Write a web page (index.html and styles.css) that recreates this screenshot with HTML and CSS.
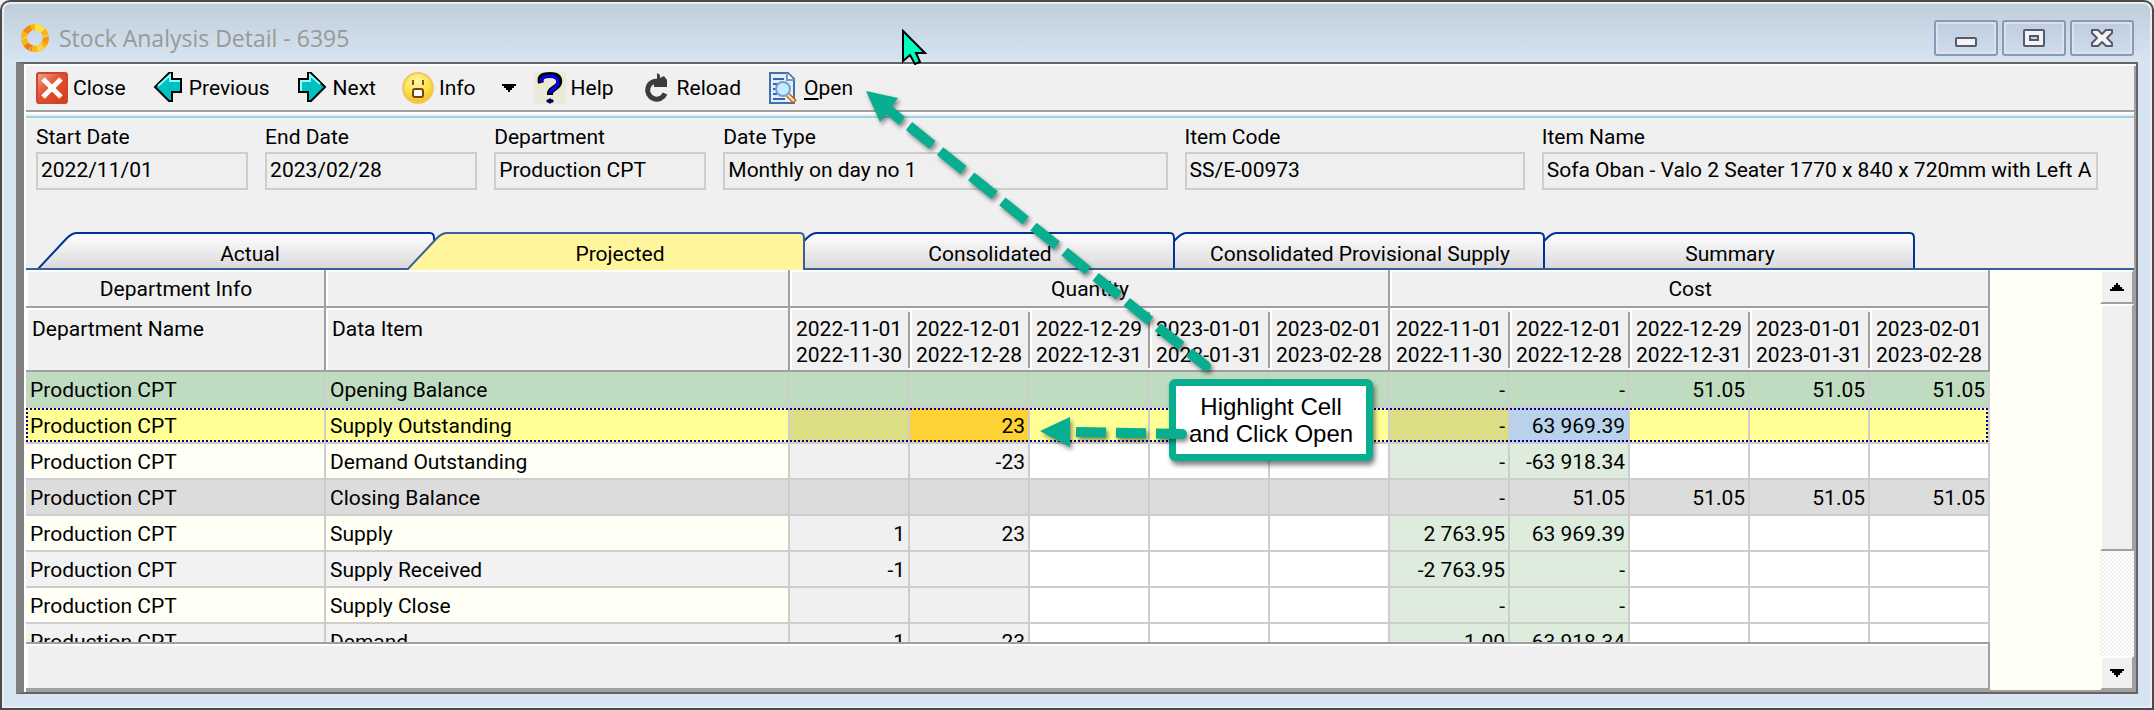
FILE: index.html
```html
<!DOCTYPE html>
<html lang="en">
<head>
<meta charset="utf-8">
<title>Stock Analysis Detail - 6395</title>
<link rel="stylesheet" href="styles.css">
</head>
<body>
<main class="window">
  <header class="titlebar">
    <svg class="app-icon" viewBox="0 0 30 30" aria-hidden="true">
      <g fill="none" stroke-width="6">
        <circle cx="15" cy="15" r="11" stroke="#fdb515"/>
        <path d="M15 4a11 11 0 0 1 8 3.500" stroke="#ffe23c"/>
        <path d="M5.500 9.500A11 11 0 0 1 11 4.700" stroke="#f58a0c"/>
        <path d="M26 14a11 11 0 0 1-1.500 6" stroke="#f79a10"/>
        <path d="M6 21.500a11 11 0 0 0 6 4" stroke="#f07c08"/>
        <path d="M17 25.800a11 11 0 0 0 6-3" stroke="#ffd428"/>
      </g>
      <path d="M20 0l3 5M29 12l-6 2M23 28l-3-5M8 29l3-5M1 16l6-2" stroke="#cbd8e5" stroke-width="1"/>
    </svg>
    <h1 class="title">Stock Analysis Detail - 6395</h1>
    <div class="caption-buttons">
      <button class="caption-button" type="button" aria-label="Minimize">
        <svg viewBox="0 0 26 22"><rect x="3" y="11" width="20" height="8" rx="1" fill="#f4f4f4" stroke="#555a6c" stroke-width="2"/></svg>
      </button>
      <button class="caption-button" type="button" aria-label="Maximize">
        <svg viewBox="0 0 26 22"><rect x="3" y="3" width="20" height="16" rx="1" fill="#f4f4f4" stroke="#555a6c" stroke-width="2"/><rect x="9" y="9" width="8" height="4" fill="#c8d3e3" stroke="#555a6c" stroke-width="2"/></svg>
      </button>
      <button class="caption-button" type="button" aria-label="Close window">
        <svg viewBox="0 0 26 22"><path d="M3 3h6l4 4 4-4h6v3l-5 5 5 5v3h-6l-4-4-4 4H3v-3l5-5-5-5z" fill="#f4f4f4" stroke="#555a6c" stroke-width="2" stroke-linejoin="round"/></svg>
      </button>
    </div>
  </header>

  <div class="client">
    <nav class="toolbar" aria-label="Toolbar">
      <button class="tool" type="button">
        <svg viewBox="0 0 32 32"><defs><linearGradient id="red" x1="0" y1="0" x2="1" y2="1"><stop offset="0" stop-color="#f3a58f"/><stop offset=".45" stop-color="#e2512f"/><stop offset="1" stop-color="#d83a12"/></linearGradient></defs><rect x="1" y="1" width="30" height="30" rx="2" fill="url(#red)" stroke="#c8492c" stroke-width="2"/><path d="M7 7l18 18M25 7L7 25" stroke="#fff" stroke-width="5"/></svg>
        <span>Close</span>
      </button>
      <button class="tool" type="button">
        <svg viewBox="0 0 32 32"><path d="M3 15L17 1h3v6h9v13h-9v9h-3z" fill="#00c0c0" stroke="#000" stroke-width="2"/><path d="M6 14L18 3v6h10" fill="none" stroke="#8ff" stroke-width="2"/></svg>
        <span>Previous</span>
      </button>
      <button class="tool" type="button">
        <svg viewBox="0 0 32 32"><path d="M29 15L15 1h-3v6H3v13h9v9h3z" fill="#00c0c0" stroke="#000" stroke-width="2"/><path d="M5 19V9h9V3l10 9" fill="none" stroke="#8ff" stroke-width="2"/></svg>
        <span>Next</span>
      </button>
      <button class="tool" type="button">
        <svg viewBox="0 0 32 32"><defs><radialGradient id="face" cx=".45" cy=".3" r=".7"><stop offset="0" stop-color="#fff7b0"/><stop offset=".55" stop-color="#fde44c"/><stop offset="1" stop-color="#f4c21a"/></radialGradient></defs><circle cx="16" cy="16" r="15" fill="url(#face)" stroke="#eec668" stroke-width="2"/><path d="M11 8v5M21 8v5" stroke="#8a5410" stroke-width="2"/><rect x="11" y="17" width="10" height="8" rx="2" fill="#fff" stroke="#7c3f14" stroke-width="2"/></svg>
        <span>Info</span>
      </button>
      <button class="tool tool-arrow" type="button" aria-label="More info">
        <svg viewBox="0 0 14 8"><path d="M0 0h14v2h-2v2h-2v2H8v2H6V6H4V4H2V2H0z"/></svg>
      </button>
      <button class="tool tool-help" type="button">
        <svg viewBox="0 0 32 32"><rect width="32" height="32" fill="#ece9d8"/><path d="M7 11C5 4 10 3 16 3s10 2 9 8c-1 5-8 5-9 10v2" fill="none" stroke="#000" stroke-width="6"/><path d="M7 10c0-5 4-6 9-6s8 2 8 7-7 5-8 10" fill="none" stroke="#00f" stroke-width="3"/><path d="M13 28h2v-1h2v1h2v2h-2v1h-2v-1h-2z" fill="#000080" stroke="#000040"/></svg>
        <span>Help</span>
      </button>
      <button class="tool" type="button">
        <svg viewBox="0 0 32 32"><path d="M19 9.500a9 9 0 1 0 6 12" fill="none" stroke="#3c3c3c" stroke-width="5"/><path d="M17 1l3 2v3l4-2 3 4v7H14v-3l3-3z" fill="#3c3c3c"/></svg>
        <span>Reload</span>
      </button>
      <button class="tool" type="button">
        <svg viewBox="0 0 32 32"><path d="M3 1h18l6 6v24H3z" fill="#e4eefa" stroke="#3f73a8" stroke-width="2"/><path d="M20 1v7h7" fill="#fff" stroke="#6f9ac4" stroke-width="2"/><path d="M6 7h11M6 12h5M6 17h3M6 22h4M6 27h12" stroke="#3f5fae" stroke-width="2"/><circle cx="16" cy="17" r="7" fill="#c4ecff" stroke="#6f9fd8" stroke-width="2"/><path d="M21 23l7 7" stroke="#c86414" stroke-width="5"/><path d="M21 23l6 6" stroke="#ffe9b8" stroke-width="2"/></svg>
        <span><u>O</u>pen</span>
      </button>
    </nav>

    <form class="fields">
      <div class="field"><label for="f1">Start Date</label><input id="f1" value="2022/11/01" readonly></div>
      <div class="field"><label for="f2">End Date</label><input id="f2" value="2023/02/28" readonly></div>
      <div class="field"><label for="f3">Department</label><input id="f3" value="Production CPT" readonly></div>
      <div class="field"><label for="f4">Date Type</label><input id="f4" value="Monthly on day no 1" readonly></div>
      <div class="field"><label for="f5">Item Code</label><input id="f5" value="SS/E-00973" readonly></div>
      <div class="field"><label for="f6">Item Name</label><input id="f6" value="Sofa Oban - Valo 2 Seater 1770 x 840 x 720mm with Left A" readonly></div>
    </form>

    <div class="tabs" role="tablist">
      <button class="tab" type="button" role="tab">
        <svg viewBox="0 0 400 38"><defs><linearGradient id="tabfill" x1="0" y1="0" x2="0" y2="1"><stop offset="0" stop-color="#fff"/><stop offset="1" stop-color="#d8d8d8"/></linearGradient></defs><path d="M1 38L31 6q5-5 10-5h353q4 0 4 5v32" fill="url(#tabfill)" stroke="#003399" stroke-width="2"/></svg>
        <span>Actual</span></button>
      <button class="tab tab-active" type="button" role="tab" aria-selected="true">
        <svg viewBox="0 0 400 38"><path d="M1 38L31 6q5-5 10-5h353q4 0 4 5v32" fill="#fff59b" stroke="#3a5f9f" stroke-width="2"/></svg>
        <span>Projected</span></button>
      <button class="tab" type="button" role="tab">
        <svg viewBox="0 0 400 38"><path d="M1 38L31 6q5-5 10-5h353q4 0 4 5v32" fill="url(#tabfill)" stroke="#003399" stroke-width="2"/></svg>
        <span>Consolidated</span></button>
      <button class="tab" type="button" role="tab">
        <svg viewBox="0 0 400 38"><path d="M1 38L31 6q5-5 10-5h353q4 0 4 5v32" fill="url(#tabfill)" stroke="#003399" stroke-width="2"/></svg>
        <span>Consolidated Provisional Supply</span></button>
      <button class="tab" type="button" role="tab">
        <svg viewBox="0 0 400 38"><path d="M1 38L31 6q5-5 10-5h353q4 0 4 5v32" fill="url(#tabfill)" stroke="#003399" stroke-width="2"/></svg>
        <span>Summary</span></button>
    </div>

    <section class="grid-pane">
      <div class="grid">
        <div class="rows">
          <table class="data">
            <colgroup><col class="c-dept"><col class="c-item"><col span="10" class="c-num"></colgroup>
            <thead>
              <tr class="bands"><th>Department Info</th><th></th><th colspan="5">Quantity</th><th colspan="5">Cost</th></tr>
              <tr class="heads"><th>Department Name</th><th>Data Item</th>
                <th class="sub">2022-11-01<br>2022-11-30</th><th class="sub">2022-12-01<br>2022-12-28</th><th class="sub">2022-12-29<br>2022-12-31</th><th class="sub">2023-01-01<br>2023-01-31</th><th>2023-02-01<br>2023-02-28</th>
                <th class="sub">2022-11-01<br>2022-11-30</th><th class="sub">2022-12-01<br>2022-12-28</th><th class="sub">2022-12-29<br>2022-12-31</th><th class="sub">2023-01-01<br>2023-01-31</th><th>2023-02-01<br>2023-02-28</th></tr>
            </thead>
            <tbody>
              <tr class="opening"><td>Production CPT</td><td>Opening Balance</td><td></td><td></td><td></td><td></td><td></td><td>-</td><td>-</td><td>51.05</td><td>51.05</td><td>51.05</td></tr>
              <tr class="current"><td>Production CPT</td><td>Supply Outstanding</td><td></td><td class="picked">23</td><td></td><td></td><td></td><td>-</td><td class="linked">63 969.39</td><td></td><td></td><td></td></tr>
              <tr><td>Production CPT</td><td>Demand Outstanding</td><td></td><td>-23</td><td></td><td></td><td></td><td>-</td><td>-63 918.34</td><td></td><td></td><td></td></tr>
              <tr class="closing"><td>Production CPT</td><td>Closing Balance</td><td></td><td></td><td></td><td></td><td></td><td>-</td><td>51.05</td><td>51.05</td><td>51.05</td><td>51.05</td></tr>
              <tr><td>Production CPT</td><td>Supply</td><td>1</td><td>23</td><td></td><td></td><td></td><td>2 763.95</td><td>63 969.39</td><td></td><td></td><td></td></tr>
              <tr class="alt"><td>Production CPT</td><td>Supply Received</td><td>-1</td><td></td><td></td><td></td><td></td><td>-2 763.95</td><td>-</td><td></td><td></td><td></td></tr>
              <tr><td>Production CPT</td><td>Supply Close</td><td></td><td></td><td></td><td></td><td></td><td>-</td><td>-</td><td></td><td></td><td></td></tr>
              <tr class="alt"><td>Production CPT</td><td>Demand</td><td>1</td><td>23</td><td></td><td></td><td></td><td>1.00</td><td>63 918.34</td><td></td><td></td><td></td></tr>
            </tbody>
          </table>
        </div>
        <div class="grid-footer"></div>
      </div>
      <div class="scrollbar">
        <button class="scroll-button" type="button" aria-label="Scroll up"><svg viewBox="0 0 14 8"><path d="M0 8h14V6h-2V4h-2V2H8V0H6v2H4v2H2v2H0z"/></svg></button>
        <div class="thumb"></div>
        <div class="track"></div>
        <button class="scroll-button" type="button" aria-label="Scroll down"><svg viewBox="0 0 14 8"><path d="M0 0h14v2h-2v2h-2v2H8v2H6V6H4V4H2V2H0z"/></svg></button>
      </div>
    </section>
  </div>

  <div class="callout">Highlight Cell<br>and Click Open</div>
  <svg class="annotations" width="1400" height="480" viewBox="0 0 1400 480" aria-hidden="true">
    <g class="arrows">
      <path d="M866 91l32 7-6 8 13 11-6 8-13-11-6 8z"/>
      <path d="M909 126L1206 366" class="dash"/>
      <circle cx="1206" cy="366" r="5"/>
      <path d="M1040 431l30-14v30z"/>
      <path d="M1076 432l106 2" class="dash"/>
      <circle cx="1182" cy="434" r="5"/>
    </g>
    <path d="M903 31v30l7-6 5 9 5-2-4-9h9z" fill="#00ffbe" stroke="#000" stroke-width="2"/>
  </svg>
</main>
</body>
</html>
```
FILE: styles.css
```css
* { box-sizing: border-box; }

body {
  margin: 0;
  background: #f0f0f0;
  color: #000;
  font: 21px/26px Roboto, sans-serif;
}

button, input {
  font: inherit;
  color: inherit;
  border: 0;
  margin: 0;
  padding: 0;
  background: none;
}

.window {
  position: relative;
  display: flex;
  flex-direction: column;
  height: 100vh;
  padding: 0 14px 14px;
  border: 2px solid #4a4a4a;
  border-radius: 10px 10px 0 0;
  background: linear-gradient(#bfccd9, #d7e4f1 60px);
  box-shadow: inset 0 0 0 2px #e9eef4;
  overflow: hidden;
}

.titlebar {
  display: flex;
  align-items: center;
  height: 60px;
  padding: 12px 4px 0;
}
.app-icon { width: 30px; height: 30px; }
.title {
  flex: 1;
  margin: 0 0 0 9px;
  font: 23px/30px "Open Sans", sans-serif;
  color: #999;
}
.caption-buttons { display: flex; gap: 4px; align-self: flex-start; padding-top: 6px; }
.caption-button {
  display: grid;
  place-items: center;
  width: 64px;
  height: 36px;
  border: 2px solid #8a99b6;
  border-radius: 3px;
  background: linear-gradient(#c0cddf, #cfdcec);
  box-shadow: inset 0 0 0 2px #d9e2ee;
}
.caption-button svg { width: 26px; height: 22px; }

.client {
  flex: 1;
  min-height: 0;
  display: flex;
  flex-direction: column;
  border: solid #646464;
  border-width: 2px 2px 2px 8px;
  border-left-color: #808080;
  background: #f0f0f0;
  box-shadow: inset 2px 2px #fff, inset -2px -2px #a0a0a0;
  padding: 2px;
}

.toolbar {
  display: flex;
  align-items: center;
  gap: 26px;
  height: 52px;
  padding: 0 10px 8px;
  background: linear-gradient(#a0a0a0, #a0a0a0) 0 44px / 100% 2px no-repeat,
    linear-gradient(#fff, #fff) 0 46px / 100% 2px no-repeat,
    linear-gradient(#99d5e5, #99d5e5) 0 50px / 100% 2px no-repeat;
}
.tool { display: flex; align-items: center; gap: 5px; }
.tool svg { width: 32px; height: 32px; }
.tool u { text-underline-offset: 3px; }
.tool-arrow svg { width: 14px; height: 8px; }
.tool-help { margin-left: -8px; }

.fields {
  display: grid;
  grid-template-columns: 212fr 212fr 212fr 444fr 340fr 556fr;
  gap: 17px;
  padding: 4px 36px 42px 10px;
}
.field { min-width: 0; }
.field label { display: block; line-height: 30px; }
.field input {
  display: block;
  width: 100%;
  height: 38px;
  padding: 0 3px 2px;
  border: 2px solid #cdcdcd;
  background: #efefef;
}

.tabs {
  display: flex;
  height: 38px;
  padding-left: 10px;
  background: linear-gradient(#3a5f9f, #3a5f9f) 0 100% / 100% 2px no-repeat;
}
.tab {
  position: relative;
  width: 370px;
  height: 38px;
  padding: 6px 0 0 58px;
  white-space: nowrap;
  z-index: 1;
}
.tab svg { position: absolute; left: 0; top: 0; width: 400px; height: 38px; z-index: -1; }
.tab:nth-child(1) { z-index: 5; }
.tab:nth-child(3) { z-index: 4; }
.tab:nth-child(4) { z-index: 3; }
.tab:nth-child(5) { z-index: 2; }
.tab-active { z-index: 6; }
.tab:not(.tab-active) { height: 36px; padding-top: 8px; clip-path: inset(0 -30px 0 0); }

.grid-pane { flex: 1; min-height: 0; display: flex; background: #fffff5; }
.grid {
  display: flex;
  flex-direction: column;
  width: 1964px;
  margin-right: auto;
}
.rows { flex: 1; min-height: 0; overflow: hidden; }
.grid-footer {
  height: 48px;
  border: solid #a0a0a0;
  border-width: 2px 2px 2px 0;
  background: #f0f0f0;
  box-shadow: inset 2px 2px #fff;
}

.data { width: 100%; table-layout: fixed; border-collapse: separate; border-spacing: 0; }
.c-dept { width: 300px; }
.c-item { width: 464px; }
.c-num { width: 120px; }
.data th {
  padding: 2px 4px 0 6px;
  border: solid #a0a0a0;
  border-width: 0 2px 2px 0;
  background: #f0f0f0;
  box-shadow: inset 2px 2px #fff;
  font-weight: normal;
  text-align: left;
  white-space: nowrap;
}
.data .bands th { height: 38px; text-align: center; }
.data .heads th { height: 64px; padding-top: 8px; vertical-align: top; }
.data .heads .sub {
  border-right: 0;
  padding-right: 6px;
  background: linear-gradient(#a0a0a0, #a0a0a0) 100% 4px / 2px 56px no-repeat #f0f0f0;
}
.data td {
  height: 36px;
  padding: 2px 3px 0 4px;
  border: solid #cdcdcd;
  border-width: 0 2px 2px 0;
  background: #fff;
  text-align: right;
  white-space: nowrap;
}
.data td:nth-child(-n+2) { text-align: left; background: #fffff5; }
.data .alt td:nth-child(-n+2) { background: #f2f2f2; }
.data td:nth-child(3), .data td:nth-child(4) { background: #f0f0f0; }
.data td:nth-child(8), .data td:nth-child(9) { background: #deecde; }
.data .opening td:nth-child(n) { background: #c0dcc0; }
.data .closing td:nth-child(n) { background: #dcdcdc; }
.data .current td:nth-child(n) { background: #ffff96; }
.data .current td:nth-child(3), .data .current td:nth-child(8) { background: #dddd86; }
.data .current td.picked:nth-child(n) { background: #fdd234; }
.data .current td.linked:nth-child(n) { background: #b9d1ea; }
.current { position: relative; }
.current::after {
  content: "";
  position: absolute;
  inset: 0 2px 2px 0;
  background: repeating-linear-gradient(90deg, #000080 0 2px, transparent 2px 4px) 0 0 / 100% 2px no-repeat,
    repeating-linear-gradient(90deg, #000080 0 2px, transparent 2px 4px) 0 100% / 100% 2px no-repeat,
    repeating-linear-gradient(#000080 0 2px, transparent 2px 4px) 0 0 / 2px 100% no-repeat,
    repeating-linear-gradient(#000080 0 2px, transparent 2px 4px) 100% 0 / 2px 100% no-repeat;
}

.scrollbar { display: flex; flex-direction: column; width: 34px; }
.scroll-button, .thumb {
  border: 2px solid #a0a0a0;
  border-top-color: #fff;
  border-left-color: #fff;
  background: #f0f0f0;
}
.scroll-button { display: grid; place-items: center; height: 34px; }
.scroll-button svg { width: 14px; height: 8px; }
.thumb { flex: 246; }
.track { flex: 106; background: repeating-conic-gradient(#f0f0f0 0 25%, #fff 0 50%) 0 0 / 4px 4px; }

.callout {
  position: absolute;
  left: 1167px;
  top: 377px;
  padding: 7px 13px;
  border: 7px solid #07ae90;
  border-radius: 6px;
  background: #fff;
  box-shadow: 2px 4px 5px rgba(0, 0, 0, .5);
  font: 24px/27px "Liberation Sans", Arial, sans-serif;
  text-align: center;
  white-space: nowrap;
}
.annotations { position: absolute; left: -2px; top: -2px; z-index: 10; pointer-events: none; }
.callout { z-index: 9; }
.arrows { fill: #07ae90; filter: drop-shadow(2px 3px 2px rgba(0, 0, 0, .45)); }
.dash { stroke: #07ae90; stroke-width: 10; stroke-dasharray: 30 10; fill: none; }
```
